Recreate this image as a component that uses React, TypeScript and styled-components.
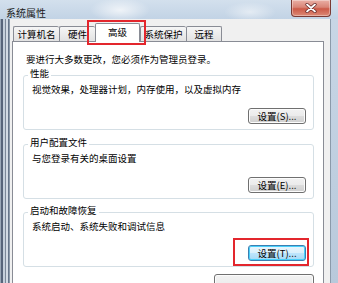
import styled, { createGlobalStyle } from "styled-components";

const GlobalStyle = createGlobalStyle`
  html, body {
    margin: 0;
    padding: 0;
  }
  body {
    width: 338px;
    height: 283px;
    overflow: hidden;
    font-family: "Noto Sans CJK SC", "Noto Sans", sans-serif;
  }
`;

const tabs = [
  { label: "计算机名", width: 46 },
  { label: "硬件", width: 36 },
  { label: "高级", width: 45, active: true },
  { label: "系统保护", width: 46 },
  { label: "远程", width: 36, last: true },
];

const groups = [
  { title: "性能", desc: "视觉效果，处理器计划，内存使用，以及虚拟内存", key: "S", gap: 2 },
  { title: "用户配置文件", desc: "与您登录有关的桌面设置", key: "E", gap: 6 },
  { title: "启动和故障恢复", desc: "系统启动、系统失败和调试信息", key: "T", gap: 5, marked: true },
];

function App() {
  return (
    <>
      <GlobalStyle />
      <Window>
        <TitleBar>
          <Title>系统属性</Title>
          <CloseButton>
            <svg width="14" height="10" viewBox="0 0 14 10">
              <path d="M3 1.5 L11 8.5 M11 1.5 L3 8.5" stroke="#5a2020" strokeWidth="3.2" strokeLinecap="round" />
              <path d="M3 1.5 L11 8.5 M11 1.5 L3 8.5" stroke="#ffffff" strokeWidth="1.8" strokeLinecap="round" />
            </svg>
          </CloseButton>
        </TitleBar>
        <Body>
          <TabStrip>
            {tabs.map((t) =>
              t.active ? (
                <Marked key={t.label}>
                  <Tab $width={t.width} $active>
                    {t.label}
                  </Tab>
                  <Highlight $top={-3} $right={-6} $bottom={-3} $left={-8} />
                </Marked>
              ) : (
                <Tab key={t.label} $width={t.width} $last={t.last}>
                  {t.label}
                </Tab>
              )
            )}
          </TabStrip>
          <TabPage>
            <Notice>要进行大多数更改，您必须作为管理员登录。</Notice>
            {groups.map((g) => (
              <Group key={g.title} $gap={g.gap}>
                <Legend>{g.title}</Legend>
                <Desc>{g.desc}</Desc>
                <ButtonRow $gap={13}>
                  {g.marked ? (
                    <Marked>
                      <WinButton $default>设置({g.key})...</WinButton>
                      <Highlight $top={-7} $right={-3} $bottom={-5} $left={-15} />
                    </Marked>
                  ) : (
                    <WinButton>设置({g.key})...</WinButton>
                  )}
                </ButtonRow>
              </Group>
            ))}
            <ButtonRow $gap={7}>
              <WinButton $width={100} $height={28}>环境变量(N)...</WinButton>
            </ButtonRow>
          </TabPage>
        </Body>
      </Window>
    </>
  );
}

export default App;

const Window = styled.div`
  width: 338px;
  height: 283px;
  overflow: hidden;
  display: flex;
  flex-direction: column;
  background:
    linear-gradient(90deg,
      #9aa8b8 0 1px, #56647a 1px 3px, #c4cfdb 3px 5px, #7b8899 5px 6px,
      #d2dbe5 6px 8px, #66758a 8px 9px, transparent 9px),
    linear-gradient(180deg, #c9d7e6, #b8c9db);
`;

const TitleBar = styled.div`
  height: 22px;
  display: flex;
  justify-content: space-between;
  align-items: flex-start;
  background:
    radial-gradient(ellipse 30px 12px at 120px 10px, rgba(255, 255, 255, 0.7), transparent),
    radial-gradient(ellipse 26px 10px at 250px 12px, rgba(255, 255, 255, 0.5), transparent),
    linear-gradient(180deg, #d3e0ed, #c2d3e5);
`;

const Title = styled.div`
  padding: 7px 0 0 6px;
  font-size: 10px;
  line-height: 12px;
  color: #1a1a1a;
`;

const CloseButton = styled.div`
  width: 38px;
  height: 16px;
  margin-right: 7px;
  display: flex;
  align-items: center;
  justify-content: center;
  border: 1px solid #7a3a34;
  border-top: none;
  border-radius: 0 0 4px 4px;
  background: linear-gradient(180deg, #eab0a6 0%, #d98577 45%, #cc5a48 55%, #dc8a76 100%);
  box-shadow: inset 0 0 0 1px rgba(255, 255, 255, 0.35);
`;

const Body = styled.div`
  flex: 1;
  display: flex;
  flex-direction: column;
  margin: 0 7px 0 9px;
  padding: 4px 6px 0 2px;
  background: #f0f0f0;
  border-left: 1px solid #8b9aaa;
  border-right: 1px solid #8b9aaa;
`;

const TabStrip = styled.div`
  position: relative;
  z-index: 1;
  height: 19px;
  margin-bottom: -1px;
  padding-left: 1px;
  display: flex;
  align-items: flex-end;
`;

const Tab = styled.div<{ $width: number; $active?: boolean; $last?: boolean }>`
  box-sizing: border-box;
  width: ${(p) => p.$width}px;
  height: ${(p) => (p.$active ? 19 : 15)}px;
  margin-bottom: ${(p) => (p.$active ? 0 : 1)}px;
  padding-bottom: ${(p) => (p.$active ? 3 : 0)}px;
  display: flex;
  align-items: center;
  justify-content: center;
  font-size: 9.5px;
  color: #000;
  border: 1px solid #898c95;
  border-bottom: none;
  border-right: ${(p) => (p.$active || p.$last ? "1px solid #898c95" : "none")};
  border-radius: 2px 2px 0 0;
  background: ${(p) =>
    p.$active ? "#ffffff" : "linear-gradient(180deg, #f6f6f6 0%, #ececec 50%, #e2e2e2 100%)"};
`;

const Marked = styled.div`
  position: relative;
  display: flex;
  align-items: flex-end;
`;

const Highlight = styled.div<{ $top: number; $right: number; $bottom: number; $left: number }>`
  position: absolute;
  top: ${(p) => p.$top}px;
  right: ${(p) => p.$right}px;
  bottom: ${(p) => p.$bottom}px;
  left: ${(p) => p.$left}px;
  border: 2px solid #e3262d;
  pointer-events: none;
`;

const TabPage = styled.div`
  flex: 1;
  display: flex;
  flex-direction: column;
  padding: 11px 9px 0 10px;
  background: #ffffff;
  border: 1px solid #898c95;
  border-bottom: none;
`;

const Notice = styled.div`
  padding-left: 3px;
  font-size: 9.5px;
  line-height: 12px;
  color: #000;
`;

const Group = styled.fieldset<{ $gap: number }>`
  margin: ${(p) => p.$gap}px 0 0;
  padding: 0 7px 5px 8px;
  min-width: 0;
  border: 1px solid #d5dfe5;
  border-radius: 3px;
`;

const Legend = styled.legend`
  margin-left: -4px;
  padding: 0 2px 4px;
  font-size: 9.5px;
  line-height: 12px;
  color: #000;
`;

const Desc = styled.div`
  font-size: 9.5px;
  line-height: 12px;
  color: #000;
`;

const ButtonRow = styled.div<{ $gap: number }>`
  flex-shrink: 0;
  margin-top: ${(p) => p.$gap}px;
  display: flex;
  justify-content: flex-end;
`;

const WinButton = styled.button<{ $default?: boolean; $width?: number; $height?: number }>`
  box-sizing: border-box;
  flex-shrink: 0;
  width: ${(p) => p.$width ?? 58}px;
  height: ${(p) => p.$height ?? 16}px;
  padding: 0;
  font-family: inherit;
  font-size: 9.5px;
  line-height: 14px;
  color: #000;
  border: 1px solid ${(p) => (p.$default ? "#3c7fb1" : "#707070")};
  border-radius: 3px;
  box-shadow: inset 0 0 0 1px ${(p) => (p.$default ? "#48d0fb" : "#fcfcfc")};
  background: ${(p) =>
    p.$default
      ? "linear-gradient(180deg, #eaf6fd 0%, #d9f0fc 50%, #bee6fd 50%, #a7d9f5 100%)"
      : "linear-gradient(180deg, #f2f2f2 0%, #ebebeb 50%, #dddddd 50%, #cfcfcf 100%)"};
`;
